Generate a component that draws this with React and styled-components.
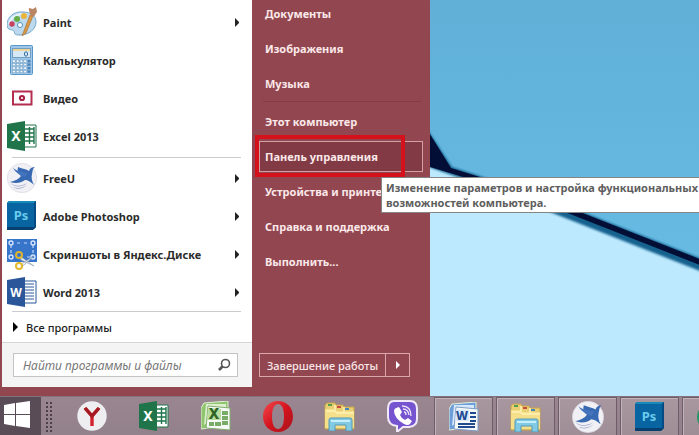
import { useState } from "react";
import styled, { createGlobalStyle } from "styled-components";

const GlobalStyle = createGlobalStyle`
    * {
        box-sizing:border-box;
    }

    body {
        margin:0;
        overflow:hidden;
        font-family:"Noto Sans", "Open Sans", sans-serif;
        font-size:11px;
    }

    button, input {
        font:inherit;
    }
`;

const Screen = styled.div`
    position:relative;
    height:100vh;
    display:flex;
    flex-direction:column;
    overflow:hidden;
    background-color:#bce9fe;
`;

const Wallpaper = styled.svg`
    position:absolute;
    top:0;
    left:0;
    width:100%;
    height:100%;
`;

const Desktop = styled.main`
    position:relative;
    flex:1;
    min-height:0;
    display:flex;
    align-items:flex-end;
`;

const StartMenu = styled.div`
    display:flex;
    padding-left:2px;
    background-color:#92464f;
`;

const ProgramsColumn = styled.div`
    width:250px;
    display:flex;
    flex-direction:column;
    margin-bottom:9px;
    padding-top:7px;
    background-color:#fff;
`;

const ProgramButton = styled.button`
    width:100%;
    height:38px;
    display:flex;
    align-items:center;
    gap:6px;
    padding:0 13px 0 5px;
    border:none;
    background:none;
    color:#2b2b2b;
    font-weight:700;
    text-align:left;
`;

const ProgramName = styled.span`
    flex:1;
    white-space:nowrap;
`;

const Separator = styled.hr`
    width:229px;
    height:1px;
    margin:${props => props.$space || 0}px 10px ${props => props.$space ? 1 : 0}px;
    border:none;
    background-color:#cbcbcf;
`;

const AllPrograms = styled.button`
    height:30px;
    display:flex;
    align-items:center;
    gap:8px;
    padding:0 11px;
    border:none;
    background:none;
    color:#1c1c1c;
    font-weight:500;
`;

const SearchPanel = styled.form`
    height:45px;
    padding:10px 14px 10px 11px;
    border-top:1px solid #d5d5d5;
    background-color:#f4f4f4;
`;

const SearchLabel = styled.label`
    height:24px;
    display:flex;
    align-items:center;
    padding:0 6px 0 9px;
    border:1px solid #c4c4c4;
    background-color:#fff;
`;

const SearchInput = styled.input`
    flex:1;
    min-width:0;
    padding:0;
    border:none;
    outline:none;
    background:none;
    color:#333;
    font-size:12px;

    &::placeholder {
        color:#777;
        font-style:italic;
        opacity:1;
    }
`;

const PlacesColumn = styled.div`
    width:178px;
    display:flex;
    flex-direction:column;
    justify-content:space-between;
    padding:0 7px 19px;
`;

const PlaceList = styled.nav`
    display:flex;
    flex-direction:column;
`;

const PlaceSeparator = styled.hr`
    width:158px;
    height:1px;
    margin:0 4px 2px;
    border:none;
    background-color:#843b45;
`;

const PlaceItem = styled.div`
    position:relative;
    height:35px;
    display:flex;
    padding:2px 0;
`;

const PlaceLink = styled.a`
    flex:1;
    display:flex;
    align-items:center;
    padding:0 5px;
    border:1px solid ${props => props.$active ? "#d3a0a4" : "transparent"};
    background-color:${props => props.$active ? "#823b45" : "transparent"};
    color:#fbe8e9;
    font-weight:700;
    text-decoration:none;
    white-space:nowrap;
`;

const RedFrame = styled.span`
    position:absolute;
    top:-4px;
    left:-4px;
    width:150px;
    height:42px;
    border:4px solid #d5111b;
    pointer-events:none;
`;

const Tooltip = styled.div`
    position:absolute;
    top:38px;
    left:122px;
    z-index:2;
    width:340px;
    padding:2px 5px 2px 4px;
    border:1px solid #858585;
    background-color:#fff;
    color:#5e5e5e;
    font-weight:700;
    line-height:15px;
    white-space:nowrap;
`;

const ShutdownGroup = styled.div`
    width:151px;
    height:24px;
    display:flex;
    border:1px solid #dba7ab;
`;

const ShutdownButton = styled.button`
    flex:1;
    padding:0;
    border:none;
    background:none;
    color:#fbe8e9;
    font-weight:500;
    white-space:nowrap;
`;

const ShutdownArrow = styled.button`
    width:24px;
    display:flex;
    align-items:center;
    justify-content:center;
    padding:0;
    border:none;
    border-left:1px solid #dba7ab;
    background:none;
`;

const Taskbar = styled.footer`
    position:relative;
    height:39px;
    display:flex;
    border-top:1px solid #83717b;
    background:linear-gradient(#9a8690, #92808a);
`;

const StartButton = styled.button`
    width:41px;
    flex-shrink:0;
    padding:0 0 0 3px;
    border:none;
    background-color:#5a4c56;
    text-align:left;
`;

const Grip = styled.div`
    width:8px;
    flex-shrink:0;
    margin:4px 8px 3px 4px;
    background-image:radial-gradient(circle, #4d404a 1px, transparent 1px);
    background-size:4px 4px;
`;

const Pinned = styled.button`
    width:62px;
    flex-shrink:0;
    display:flex;
    align-items:center;
    justify-content:center;
    padding:0;
    border:none;
    background:none;
`;

const Running = styled(Pinned)`
    width:59px;
    margin-left:1px;
    margin-right:2px;
    border:1px solid #6e5d68;
    border-bottom:none;
    background:linear-gradient(#a9979f, #a08e97);
    box-shadow:inset 1px 1px 0 #c1b3ba;
`;

const Arrow = ({ color = "#222", size = 10 }) => (
    <svg width={size / 2} height={size} viewBox="0 0 5 10" aria-hidden="true">
        <path d="M0 0l5 5-5 5z" fill={color} />
    </svg>
);

const PaintIcon = () => (
    <svg width="30" height="30" viewBox="0 0 30 30" aria-hidden="true">
        <path d="M16 5C7 4 0 10 0 18c0 6 6 4 7 6 1 3 0 4 6 4 9 0 16-6 16-13C29 9 24 5 16 5z" fill="#bcd9ee" stroke="#75a8cc" />
        <path d="M2 17C4 9 12 6 20 8" stroke="#e7f4fb" strokeWidth="2" fill="none" />
        <circle cx="5" cy="17" r="2.7" fill="#c94161" />
        <circle cx="10" cy="12" r="3" fill="#66ad47" />
        <circle cx="17" cy="9" r="3" fill="#eab43b" />
        <circle cx="13" cy="18" r="2.5" fill="#fff" stroke="#5390b9" />
        <path d="M15 29L23 8l3 1-7 17z" fill="#d99843" stroke="#a9692c" strokeWidth=".6" />
        <path d="M23 9c1-3-2-5-1-8l4 1 3-2 1 5c-2 2-2 4-4 5z" fill="#ba8562" />
    </svg>
);

const CalculatorIcon = () => (
    <svg width="30" height="30" viewBox="0 0 30 30" aria-hidden="true">
        <rect x="3.5" y=".5" width="22" height="29" rx="1" fill="#9fc7e9" stroke="#5796c5" />
        <rect x="5.5" y="3.5" width="18" height="9" fill="#d4e8f6" stroke="#739ebe" />
        <path d="M6 4h17v2H6z" fill="#efd498" />
        <ellipse cx="19" cy="9" rx="1.6" ry="2.2" fill="none" stroke="#356b9d" />
        {[0, 1, 2, 3].map(row => [0, 1, 2, 3, 4].map(col => (
            <rect key={`${row}-${col}`} x={5.5 + col * 3.8} y={15 + row * 3.5} width="2.7" height="2.3" fill={col === 4 ? "#4b85bd" : "#f2f8fd"} stroke="#608fb6" strokeWidth=".4" />
        )))}
    </svg>
);

const VideoIcon = () => (
    <svg width="30" height="30" viewBox="0 0 30 30" aria-hidden="true">
        <path d="M6 8.5h18.5v13H6z" fill="#fff" stroke="#b42e50" strokeWidth="2" />
        <circle cx="15" cy="15" r="2.1" fill="none" stroke="#a82043" strokeWidth="2" />
    </svg>
);

const OfficeIcon = ({ letter, color }) => (
    <svg width="30" height="30" viewBox="0 0 30 30" aria-hidden="true">
        <path d="M17 4h12v22H17z" fill="#fff" stroke={color} />
        {letter === "X"
            ? <path d="M18 8h9M18 12h9M18 16h9M18 20h9M22.5 6v17M27 6v17" stroke={color} strokeWidth="1.4" />
            : <path d="M18 7h9M18 10h9M18 13h9M18 16h9M18 19h9M18 22h9" stroke={color} />}
        <path d="M0 3L18 0v30L0 27z" fill={color} />
        <text x="9" y="20" textAnchor="middle" fill="#fff" fontSize={letter === "X" ? 14 : 12} fontWeight="700">{letter}</text>
    </svg>
);

const FreeUIcon = ({ size = 30 }) => (
    <svg width={size} height={size} viewBox="0 0 30 30" aria-hidden="true">
        <circle cx="15" cy="15" r="14.7" fill="#f0f0f5" stroke="#d5d5df" strokeWidth=".6" />
        <path d="M11 4c5 2 8 2 11 4 1-3 3-4 6-4-3 2-2 4-3 7-1 4 0 7 2 11-3-3-6-5-9-5-4 3-9 4-15 2 5-1 9-3 11-6-3-2-4-5-3-9z" fill="#3869b3" />
        <path d="M6 5c5 4 10 4 15 5l-3 4C12 12 8 9 6 5z" fill="#4474bd" />
        <path d="M3 20c6 4 12 3 17 0-4 4-12 5-17 0zM6 24c5 2 9 1 14-2-4 4-10 5-14 2z" fill="#9fa8cc" />
    </svg>
);

const PhotoshopIcon = () => (
    <svg width="30" height="30" viewBox="0 0 30 30" aria-hidden="true">
        <path d="M0 2l2-2h27v26l-3 3H0z" fill="#073f70" />
        <path d="M0 2h27v24H0z" fill="#0965a1" />
        <path d="M0 2l2-2h27l-2 2z" fill="#168ab8" />
        <path d="M27 2l2-2v26l-2 2z" fill="#064a83" />
        <text x="14" y="19" textAnchor="middle" fill="#68cbed" fontSize="13" fontWeight="700">Ps</text>
    </svg>
);

const ScissorsIcon = () => (
    <svg width="30" height="32" viewBox="0 0 30 32" aria-hidden="true">
        <path d="M0 1h30v23H0z" fill="#3775cb" />
        <path d="M4 7v8M26 7v8M10 5h3M17 5h3M20 19h3" stroke="#c4dafa" strokeWidth="1.2" strokeDasharray="3 2" />
        <g fill="#3775cb" stroke="#dce8ff" strokeWidth="1.3">
            <circle cx="4" cy="5" r="2" />
            <circle cx="26" cy="5" r="2" />
            <circle cx="4" cy="19" r="2" />
            <circle cx="26" cy="19" r="2" />
        </g>
        <path d="M13 18l14 10-13-6zM14 26l13-8-11 10z" fill="#e4e6e9" stroke="#8699ae" strokeWidth=".6" />
        <circle cx="12" cy="17" r="3" fill="none" stroke="#dbb52b" strokeWidth="2" />
        <circle cx="12" cy="28" r="3" fill="none" stroke="#e4b92e" strokeWidth="2" />
    </svg>
);

const SearchIcon = () => (
    <svg width="14" height="14" viewBox="0 0 14 14" aria-hidden="true">
        <circle cx="8.5" cy="5.5" r="4" fill="none" stroke="#555" strokeWidth="1.6" />
        <path d="M5.5 8.5L2 12" stroke="#555" strokeWidth="2.6" />
    </svg>
);

const WindowsIcon = () => (
    <svg width="28" height="27" viewBox="0 0 28 27" aria-hidden="true">
        <path d="M1 4l11-2v11H1zM13 2l14-2v13H13zM1 14h11v11L1 23zM13 14h14v13l-14-2z" fill="#fff" />
    </svg>
);

const YandexIcon = () => (
    <svg width="30" height="30" viewBox="0 0 30 30" aria-hidden="true">
        <circle cx="15" cy="15" r="14.7" fill="#eeeef0" />
        <path d="M8 7l7 8v10M22 7l-7 8" stroke="#d3202a" strokeWidth="3.4" fill="none" />
        <path d="M8 7l7 8 7-8" stroke="#a51920" strokeWidth="3.4" fill="none" />
    </svg>
);

const OldOfficeIcon = ({ word }) => {
    const dark = word ? "#214b91" : "#2f6426";
    return (
        <svg width="30" height="30" viewBox="0 0 30 30" aria-hidden="true">
            <path d="M3 2L27 0v25L0 28V7z" fill={word ? "#6d9edb" : "#8fc56c"} stroke="#e1efd9" />
            <path d="M5 3h20v5L3 24z" fill={word ? "#d6e8f9" : "#dcefcf"} />
            <path d="M7 5l22 2v22L5 27z" fill="#f5f9f7" stroke={word ? "#7c9cc5" : "#82ad70"} />
            {word
                ? <path d="M21 11h6M21 15h6M21 19h6M9 22h17M9 25h17" stroke={dark} strokeWidth="2" />
                : <path d="M21 10h6v4h-6zM21 15h6v4h-6zM21 20h6v4h-6zM14 21h6v4h-6zM8 21h5v4H8z" fill="#78ad67" />}
            <path d="M7 7l13 1v11H6z" fill={word ? "#dce9fb" : "#b9dc9f"} />
            <text x="13" y="18" textAnchor="middle" fill={dark} fontSize={word ? 12 : 15} fontWeight="800">{word ? "W" : "X"}</text>
        </svg>
    );
};

const OperaIcon = () => (
    <svg width="30" height="31" viewBox="0 0 30 31" aria-hidden="true">
        <defs>
            <linearGradient id="opera" x1="0" y1="0" x2="1" y2="1">
                <stop offset="0" stopColor="#f44a4e" />
                <stop offset=".5" stopColor="#d4141e" />
                <stop offset="1" stopColor="#a8141c" />
            </linearGradient>
        </defs>
        <path fillRule="evenodd" d="M15 0C6 0 0 7 0 15.500S6 31 15 31s15-7 15-15.500S24 0 15 0zm0 3c4 0 6 5 6 12.500S19 28 15 28s-6-5-6-12.500S11 3 15 3z" fill="url(#opera)" />
    </svg>
);

const ExplorerIcon = () => (
    <svg width="32" height="30" viewBox="0 0 32 30" aria-hidden="true">
        <path d="M1 4l2-2h8l1 2h7l1 2h10v22H1z" fill="#e9ce72" stroke="#c4a44d" />
        <path d="M4 3h4v2H4z" fill="#4fa052" />
        <path d="M13 5h4v2h-4z" fill="#cd4b3d" />
        <path d="M21 7h4v2h-4z" fill="#4687b5" />
        <path d="M1 8h10l2 2h17v17H1z" fill="#f5df8b" />
        <path d="M2 10h8l3 2h17M11 4v5M20 6v5" stroke="#fff2b7" strokeWidth="1.5" fill="none" />
        <path d="M5 30V19q0-2 2-2h19q2 0 2 2v11h-6v-6H11v6z" fill="#82c9e3" stroke="#5299b9" />
        <path d="M7 20h19" stroke="#c4eefa" strokeWidth="2" />
    </svg>
);

const ViberIcon = () => (
    <svg width="32" height="32" viewBox="0 0 32 32" aria-hidden="true">
        <path d="M8 1h16q7 0 7 8v10q0 7-8 8h-6l-6 5v-6q-9-1-9-9V9q0-8 6-8z" fill="#7653cf" stroke="#f0e9fa" strokeWidth="2" />
        <path d="M10 8l3-1 3 5-2 3q1 3 5 5l3-2 4 3-2 3q-2 2-6 0Q8 18 8 11q0-2 2-3z" fill="#fff" />
        <path d="M16 6q9 0 9 10M17 9q5 0 6 6M18 12q2 0 2 3" stroke="#eee5fc" strokeWidth="1.3" fill="none" />
    </svg>
);

const programs = [
    { name: "Paint", icon: <PaintIcon />, arrow: true },
    { name: "Калькулятор", icon: <CalculatorIcon /> },
    { name: "Видео", icon: <VideoIcon /> },
    { name: "Excel 2013", icon: <OfficeIcon letter="X" color="#20744a" /> }
];

const recentPrograms = [
    { name: "FreeU", icon: <FreeUIcon />, arrow: true },
    { name: "Adobe Photoshop", icon: <PhotoshopIcon />, arrow: true },
    { name: "Скриншоты в Яндекс.Диске", icon: <ScissorsIcon />, arrow: true },
    { name: "Word 2013", icon: <OfficeIcon letter="W" color="#2b579a" />, arrow: true }
];

const pinned = [
    { name: "Яндекс", icon: <YandexIcon /> },
    { name: "Excel 2013", icon: <OfficeIcon letter="X" color="#20744a" /> },
    { name: "Excel", icon: <OldOfficeIcon /> },
    { name: "Opera", icon: <OperaIcon /> },
    { name: "Проводник", icon: <ExplorerIcon /> },
    { name: "Viber", icon: <ViberIcon /> }
];

const running = [
    { name: "Word", icon: <OldOfficeIcon word /> },
    { name: "Папка", icon: <ExplorerIcon /> },
    { name: "FreeU", icon: <FreeUIcon size={32} /> },
    { name: "Photoshop", icon: <PhotoshopIcon /> },
    { name: "Браузер", icon: <svg width="30" height="30" aria-hidden="true"><circle cx="15" cy="15" r="15" fill="#249565" /></svg> }
];

const Program = ({ name, icon, arrow }) => (
    <ProgramButton type="button">
        {icon}
        <ProgramName>{name}</ProgramName>
        {arrow && <Arrow size={9} />}
    </ProgramButton>
);

const Place = ({ children, active, extra }) => (
    <PlaceItem>
        <PlaceLink href="#" $active={active}>{children}</PlaceLink>
        {extra}
    </PlaceItem>
);

const App = () => {

    const [query, setQuery] = useState("");

    return (<>
        <GlobalStyle />
        <Screen>
            <Wallpaper viewBox="0 0 699 435" preserveAspectRatio="xMaxYMin slice" aria-hidden="true">
                <defs>
                    <linearGradient id="sky" x1="0" y1="0" x2="0" y2="1">
                        <stop offset="0" stopColor="#60b0d8" />
                        <stop offset="1" stopColor="#67bbe3" />
                    </linearGradient>
                    <filter id="soft"><feGaussianBlur stdDeviation="1" /></filter>
                </defs>
                <path d="M0 0h699v265L580 216 450 170 430 155H0z" fill="url(#sky)" />
                <path d="M420 118l32 49 28 9 100 35 130 51v13L550 212l-90-34-40-14z" fill="#17628f" filter="url(#soft)" />
                <path d="M420 118l31 50 29 9 100 35 130 51v6L570 214l-110-38-40-12z" fill="#020e36" />
            </Wallpaper>

            <Desktop>
                <StartMenu>
                    <ProgramsColumn>
                        {programs.map(item => <Program key={item.name} {...item} />)}
                        <Separator $space={2} />
                        {recentPrograms.map(item => <Program key={item.name} {...item} />)}
                        <Separator />
                        <AllPrograms type="button"><Arrow color="#000" />Все программы</AllPrograms>
                        <SearchPanel onSubmit={e => e.preventDefault()}>
                            <SearchLabel>
                                <SearchInput
                                    type="text"
                                    aria-label="Найти программы и файлы"
                                    placeholder="Найти программы и файлы"
                                    value={query}
                                    onChange={e => setQuery(e.target.value)}
                                />
                                <SearchIcon />
                            </SearchLabel>
                        </SearchPanel>
                    </ProgramsColumn>

                    <PlacesColumn>
                        <PlaceList>
                            <Place>Документы</Place>
                            <Place>Изображения</Place>
                            <Place>Музыка</Place>
                            <PlaceSeparator />
                            <Place>Этот компьютер</Place>
                            <Place active extra={<>
                                <RedFrame />
                                <Tooltip role="tooltip">Изменение параметров и настройка функциональных<br />возможностей компьютера.</Tooltip>
                            </>}>Панель управления</Place>
                            <Place>Устройства и принтеры</Place>
                            <Place>Справка и поддержка</Place>
                            <Place>Выполнить...</Place>
                        </PlaceList>
                        <ShutdownGroup>
                            <ShutdownButton type="button">Завершение работы</ShutdownButton>
                            <ShutdownArrow type="button" aria-label="Другие действия"><Arrow color="#fff" size={8} /></ShutdownArrow>
                        </ShutdownGroup>
                    </PlacesColumn>
                </StartMenu>
            </Desktop>

            <Taskbar>
                <StartButton type="button" aria-label="Пуск"><WindowsIcon /></StartButton>
                <Grip />
                {pinned.map(item => <Pinned key={item.name} type="button" aria-label={item.name}>{item.icon}</Pinned>)}
                {running.map(item => <Running key={item.name} type="button" aria-label={item.name}>{item.icon}</Running>)}
            </Taskbar>
        </Screen>
    </>)
}

export default App;
